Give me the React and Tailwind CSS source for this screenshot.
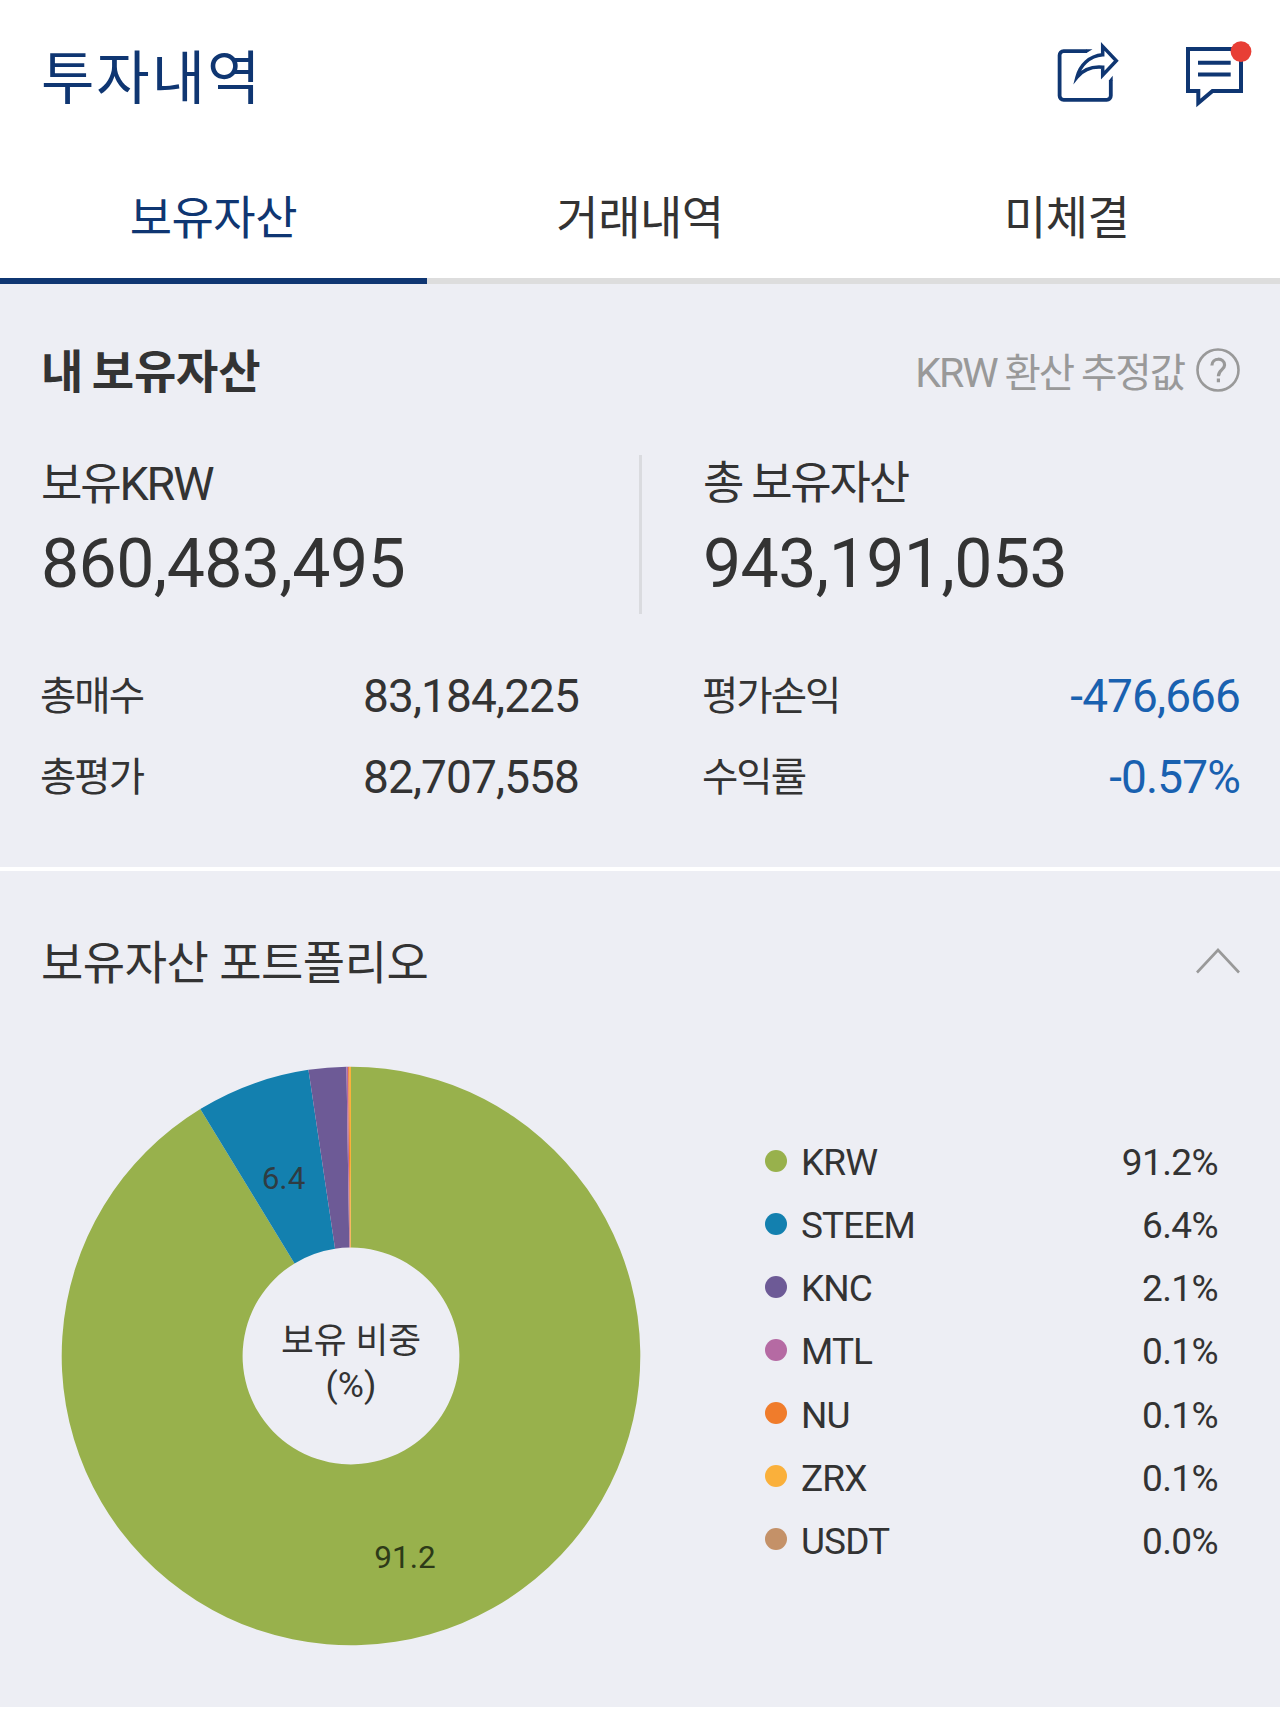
import React from "react";

const tabs = ["보유자산", "거래내역", "미체결"];

const stats = [
  [
    { label: "총매수", value: "83,184,225" },
    { label: "총평가", value: "82,707,558" },
  ],
  [
    { label: "평가손익", value: "-476,666", minus: true },
    { label: "수익률", value: "-0.57%", minus: true },
  ],
];

// share is the drawn size of the slice, percent is the rounded text
const portfolio = [
  { name: "KRW", percent: "91.2", share: 91.28, color: "#98b14c" },
  { name: "STEEM", percent: "6.4", share: 6.37, color: "#1380af" },
  { name: "KNC", percent: "2.1", share: 2.1, color: "#6d5a96" },
  { name: "MTL", percent: "0.1", share: 0.09, color: "#b56aa3" },
  { name: "NU", percent: "0.1", share: 0.08, color: "#f07c2b" },
  { name: "ZRX", percent: "0.1", share: 0.08, color: "#fab03b" },
  { name: "USDT", percent: "0.0", share: 0, color: "#c49168" },
];

const ShareIcon = () => (
  <svg width="66" height="68" viewBox="0 0 66 68" fill="none" stroke="#0f3672" strokeWidth="3.8">
    <path d="M31 11.2H7.6a4 4 0 0 0-4 4V55.8a4 4 0 0 0 4 4H50.8a4 4 0 0 0 4-4V40" />
    <path d="M30.5 9.3H36.5L30.5 13.1ZM56.7 35.8L52.9 40.5H56.7Z" fill="#0f3672" stroke="none" />
    <path
      d="M46.7 6.4L60.3 20.7L46.7 35.2V27.2C36 26.2 27.5 29.3 21 37.2C24 25.5 33 16 46.7 14.8Z"
      strokeWidth="3.5"
      strokeMiterlimit="10"
    />
  </svg>
);

const MessageIcon = () => (
  <svg width="68" height="68" viewBox="0 0 68 68" fill="none" stroke="#0f3672" strokeWidth="4">
    <path d="M4 9H57V51H28.5L14.3 63V51H4Z" />
    <path d="M14 22.8H46.7M14 34.5H46.7" />
    <circle cx="57" cy="11.6" r="10.4" fill="#e83e35" stroke="none" />
  </svg>
);

const CENTER = 290;
const OUTER = 289.3;
const INNER = 108.4;

const point = (radius, share) => {
  const angle = (share / 100) * Math.PI * 2;
  return `${CENTER + radius * Math.sin(angle)} ${CENTER - radius * Math.cos(angle)}`;
};

const slicePath = (start, end) => {
  const large = end - start > 50 ? 1 : 0;
  return `M${point(OUTER, start)}A${OUTER} ${OUTER} 0 ${large} 1 ${point(OUTER, end)}L${point(INNER, end)}A${INNER} ${INNER} 0 ${large} 0 ${point(INNER, start)}Z`;
};

const DonutChart = () => {
  let start = 0;
  return (
    <svg width="580" height="580" viewBox="0 0 580 580" className="shrink-0">
      {portfolio.map((item) => {
        const from = start;
        start += item.share;
        return item.share > 0 ? (
          <path key={item.name} d={slicePath(from, start)} fill={item.color} />
        ) : null;
      })}
      <g textAnchor="middle" fill="#333333">
        <text x="222.5" y="123" fontSize="31.5" fillOpacity="0.88">6.4</text>
        <text x="344" y="501.5" fontSize="31.5" fill="#2d3a18">91.2</text>
        <text x="290" y="287" fontSize="35.7">보유 비중</text>
        <text x="290" y="331" fontSize="35.7">(%)</text>
      </g>
    </svg>
  );
};

const Balance = ({ label, value }) => (
  <div className="pt-px">
    <p className="h-14 text-[45px] leading-[56px] tracking-[-2.2px]">{label}</p>
    <p className="h-[102px] text-[68px] leading-[105px] tracking-[-0.6px]">{value}</p>
  </div>
);

const App = () => {
  return (
    <div className="h-[1732px] w-[1280px] overflow-hidden bg-white font-['Roboto','Noto_Sans_CJK_KR',sans-serif] text-[#333333]">
      <header className="flex h-[160px] items-center justify-between pb-1 pl-[41px] pr-[28px]">
        <h1 className="pt-0.5 text-[58px] leading-none tracking-[2px] text-[#0f3672]">투자내역</h1>
        <div className="mb-2 flex items-center gap-[62px]">
          <ShareIcon />
          <MessageIcon />
        </div>
      </header>

      <nav className="grid h-[124px] grid-cols-3">
        {tabs.map((tab, idx) => (
          <button
            key={tab}
            className={`border-b-6 pb-0.5 text-[46px] leading-none tracking-[-0.5px] ${
              idx === 0 ? "border-[#0f3672] text-[#0f3672]" : "border-[#dddddd]"
            }`}
          >
            {tab}
          </button>
        ))}
      </nav>

      <section className="h-[587px] border-b-4 border-white bg-[#edeef4] pl-[41px] pr-10 pt-[59px]">
        <div className="flex h-[60px] items-center justify-between">
          <h2 className="pb-0.5 text-[46px] font-bold leading-none tracking-[-0.2px] [word-spacing:-2.5px]">
            내 보유자산
          </h2>
          <div className="flex items-center gap-3 text-[39.5px] leading-none tracking-[-2px] text-[#999999]">
            <p>
              <span className="text-[41px]">KRW</span> 환산 추정값
            </p>
            <svg width="44" height="44" viewBox="0 0 44 44" fill="none" stroke="#999999" strokeWidth="2.6" className="mb-1.5">
              <circle cx="22" cy="22" r="20.5" />
              <path
                d="M15.9 17.6C15.9 9.2 28.6 9.2 28.6 17C28.6 21.6 22.4 21.8 22.4 28.2M22.4 30.6V34.2"
                strokeWidth="3.2"
              />
            </svg>
          </div>
        </div>

        <div className="mt-[52px] flex h-[159px]">
          <div className="w-[598px]">
            <Balance
              label={
                <>
                  보유<span className="text-[46.5px] tracking-[-2px]">KRW</span>
                </>
              }
              value="860,483,495"
            />
          </div>
          <div className="w-[3px] bg-[#dadbdf]" />
          <div className="pl-[61px]">
            <Balance label="총 보유자산" value="943,191,053" />
          </div>
        </div>

        <div className="mt-[41px] grid grid-cols-[538px_537px] gap-x-[124px]">
          {stats.map((column, idx) => (
            <dl key={idx}>
              {column.map((row) => (
                <div key={row.label} className="flex h-[81px] items-center justify-between">
                  <dt className="-ml-px pt-0.5 text-[39.5px] leading-none tracking-[-2px]">{row.label}</dt>
                  <dd
                    className={`text-[46px] leading-none tracking-[-0.9px] ${row.minus ? "text-[#1961b0]" : ""}`}
                  >
                    {row.value}
                  </dd>
                </div>
              ))}
            </dl>
          ))}
        </div>
      </section>

      <section className="h-[836px] bg-[#edeef4] pl-[41px] pr-10 pt-[63px]">
        <div className="flex h-[60px] items-center justify-between">
          <h2 className="pb-0.5 text-[46px] leading-none tracking-[-0.5px]">보유자산 포트폴리오</h2>
          <svg width="44" height="26" viewBox="0 0 44 26" fill="none" stroke="#999999" strokeWidth="2.6" className="mb-1.5">
            <path d="M1 24.5L22 2L43 24.5" />
          </svg>
        </div>

        <div className="mt-[72px] flex pl-5">
          <DonutChart />
          <ul className="ml-[124px] mt-[64px] w-[453px]">
            {portfolio.map((item) => (
              <li key={item.name} className="flex h-[63.15px] items-center text-[37px] leading-none">
                <span className="mb-0.5 size-[22px] rounded-full" style={{ backgroundColor: item.color }} />
                <span className="ml-[14px] pt-0.5 tracking-[-0.9px]">{item.name}</span>
                <span className="ml-auto pt-0.5 tracking-[-0.6px]">{item.percent}%</span>
              </li>
            ))}
          </ul>
        </div>
      </section>
    </div>
  );
};

export default App;
